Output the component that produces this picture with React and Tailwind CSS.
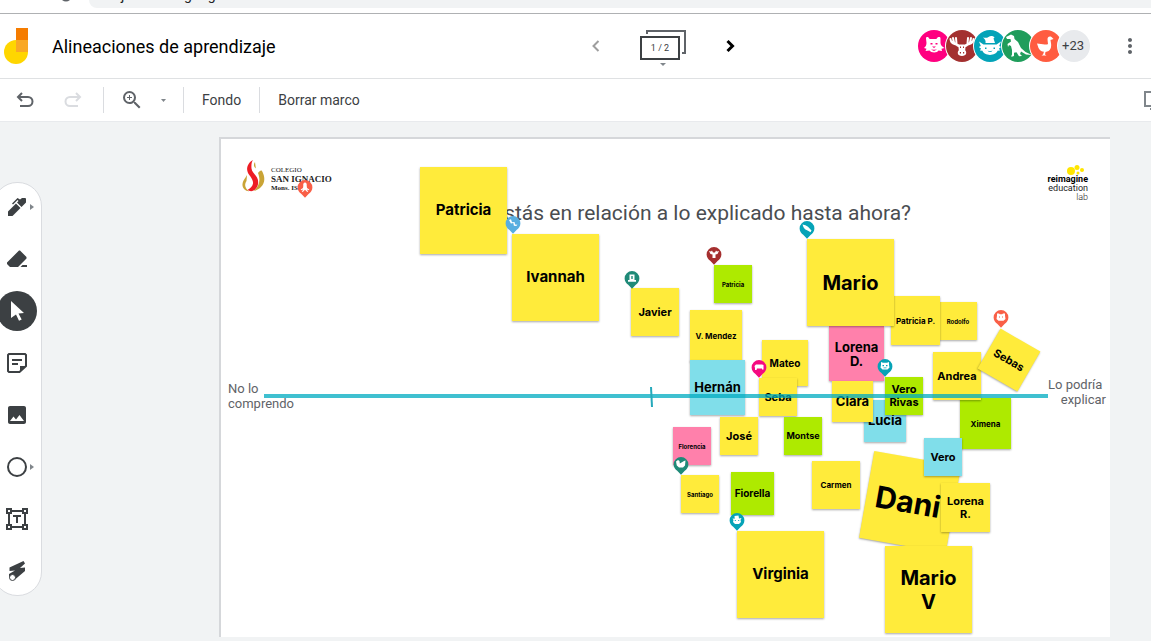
import React, { useState } from "react";
import { MdMoreVert, MdZoomIn, MdImage } from "react-icons/md";

const YELLOW = "bg-[#ffeb3b]";
const GREEN = "bg-[#aeea00]";
const CYAN = "bg-[#80deea]";
const PINK = "bg-[#ff80ab]";

// Later notes lie on top of earlier ones
const notes = [
  { text: "Patricia", color: YELLOW, place: "left-[199px] top-[28px] size-[87px]", font: "text-[15px]" },
  { text: "Ivannah", color: YELLOW, place: "left-[291px] top-[95px] size-[87px]", font: "text-[15px]" },
  { text: "Javier", color: YELLOW, place: "left-[410px] top-[149px] size-[48px]", font: "text-[11px]" },
  { text: "Patricia", color: GREEN, place: "left-[493px] top-[126px] size-[38px]", font: "text-[6px]" },
  { text: "V. Mendez", color: YELLOW, place: "left-[469px] top-[171px] size-[52px]", font: "text-[8px]" },
  { text: "Hernán", color: CYAN, place: "left-[469px] top-[221px] size-[55px]", font: "text-[13px]" },
  { text: "Mateo", color: YELLOW, place: "left-[541px] top-[201px] size-[46px]", font: "text-[10px]" },
  { text: "Seba", color: YELLOW, place: "left-[538px] top-[239px] size-[38px]", font: "text-[11px]" },
  { text: "José", color: YELLOW, place: "left-[499px] top-[278px] size-[38px]", font: "text-[11px]" },
  { text: "Montse", color: GREEN, place: "left-[563px] top-[278px] size-[38px]", font: "text-[9px]" },
  { text: "Florencia", color: PINK, place: "left-[452px] top-[288px] size-[38px]", font: "text-[6px]" },
  { text: "Santiago", color: YELLOW, place: "left-[460px] top-[336px] size-[38px]", font: "text-[6px]" },
  { text: "Fiorella", color: GREEN, place: "left-[510px] top-[333px] size-[43px]", font: "text-[10px]" },
  { text: "Carmen", color: YELLOW, place: "left-[591px] top-[322px] size-[48px]", font: "text-[8px]" },
  { text: "Virginia", color: YELLOW, place: "left-[516px] top-[392px] size-[87px]", font: "text-[15px]" },
  { text: "Lorena D.", color: PINK, place: "left-[608px] top-[187px] size-[55px]", font: "text-[13px] leading-[14px]" },
  { text: "Rodolfo", color: YELLOW, place: "left-[718px] top-[163px] size-[38px]", font: "text-[6px]" },
  { text: "Patricia P.", color: YELLOW, place: "left-[670px] top-[157px] size-[49px]", font: "text-[8px]" },
  { text: "Mario", color: YELLOW, place: "left-[586px] top-[100px] size-[87px]", font: "text-[20px]" },
  { text: "Lucía", color: CYAN, place: "left-[643px] top-[261px] size-[42px]", font: "text-[13px]" },
  { text: "Clara", color: YELLOW, place: "left-[611px] top-[242px] size-[41px]", font: "text-[13px]" },
  { text: "Vero Rivas", color: GREEN, place: "left-[664px] top-[238px] size-[38px]", font: "text-[11px] leading-[13px]" },
  { text: "Ximena", color: GREEN, place: "left-[739px] top-[259px] size-[51px]", font: "text-[8px]" },
  { text: "Andrea", color: YELLOW, place: "left-[712px] top-[213px] size-[48px]", font: "text-[11px]" },
  { text: "Sebas", color: YELLOW, place: "left-[765px] top-[198px] size-[46px] rotate-30", font: "text-[11px]" },
  { text: "Dani", color: YELLOW, place: "left-[645px] top-[319px] size-[88px] rotate-10", font: "text-[30px] pr-1" },
  { text: "Vero", color: CYAN, place: "left-[703px] top-[299px] size-[38px]", font: "text-[11px]" },
  { text: "Lorena R.", color: YELLOW, place: "left-[720px] top-[344px] size-[49px]", font: "text-[11px] leading-[13px]" },
  { text: "Mario V", color: YELLOW, place: "left-[664px] top-[407px] size-[87px]", font: "text-[20px] leading-[24px] px-3" },
];

const glyphs = {
  octopus: "M8 2.500c1.400 0 2 1.500 1.700 3.200L10 8l2.300 1.500-.5.800-2.100-.8 1.500 2-1 .5L8 9.700l-2.200 2.300-1-.5 1.500-2-2.100.8-.5-.8L6 8l.3-2.300C6 4 6.600 2.500 8 2.500z",
  snake: "M4 4l2-.8 1 3 2.500-.3.6 2.600 2.400.2-1.300 1.400-2.300-.4-.6-2.600-2.400.4z",
  hat: "M5.500 3.500h5v5.500h1.500v1.800H4V9h1.500zM7.300 5v3h1.400V5z",
  moose: "M3 4l2 .5L6 3.500l1 2h2l1-2 1 1L13 4l-1.500 3-2 .5L9.500 11h-3L6.500 7.500l-2-.5z",
  fish: "M3.500 3.500l3 .8 2.500 1.500 3.500 3.700-1 1.800-2-1.300-3.500-1.800-1.500-2z",
  hippo: "M3.500 6L5 4.500h6L12.500 5v4.500H11V8.500H6L5.500 10H4V8z",
  bear: "M4 3.500h2l.8.800h2.400l.8-.8h2v2l.5 3.500-2 1.800h-5l-2-1.800.5-3.500zM6 6.500v1h1v-1zM9 6.500v1h1v-1z",
  bird: "M3 4.500L5 3l1.500 1 .3 2.500L11 4l1.500-.5L12 8.500l-2 2H6L3.800 8.500z",
  axolotl: "M5.500 3l4-.5.500 3 2.500-.5-1 2 .5 2-2 2H6L4 9l.5-2-1-1.500 2.200.2zM5.800 7v1h1V7zM9.200 7v1h1V7z",
  otter: "M4 3l2 .8h4L12 3v3l.5 2.500-2 2h-5l-2-2L4 6zM5.500 6v1.200h1.500V6zM9 6v1.200h1.500V6zM6.500 8.500v.8h3v-.8z",
};

const pins = [
  { glyph: "octopus", place: "left-[76px] top-[41px]", color: "fill-[#f95f47]" },
  { glyph: "snake", place: "left-[284px] top-[77px]", color: "fill-[#58aee0]" },
  { glyph: "hat", place: "left-[403px] top-[132px]", color: "fill-[#1f8a78]" },
  { glyph: "moose", place: "left-[485px] top-[108px]", color: "fill-[#a52f2f]" },
  { glyph: "fish", place: "left-[578px] top-[82px]", color: "fill-[#06a3b7]" },
  { glyph: "hippo", place: "left-[530px] top-[221px]", color: "fill-[#f50a80]" },
  { glyph: "otter", place: "left-[656px] top-[220px]", color: "fill-[#06a3b7]" },
  { glyph: "bear", place: "left-[772px] top-[171px]", color: "fill-[#f95f47]" },
  { glyph: "bird", place: "left-[452px] top-[318px]", color: "fill-[#1f8a78]" },
  { glyph: "axolotl", place: "left-[508px] top-[374px]", color: "fill-[#06a3b7]" },
];

const Pin = ({ glyph, place, color }) => (
  <svg viewBox="0 0 16 18" className={`absolute h-[18px] w-4 ${place}`} aria-hidden="true">
    <path className={color} d="M8 0a7.400 7.400 0 0 1 7.400 7.400c0 3.200-1.900 4.800-3.600 6.300L8 17.700l-3.800-4C2.500 12.200.6 10.600.6 7.400A7.400 7.400 0 0 1 8 0z" />
    <path fill="#fff" fillRule="evenodd" d={glyphs[glyph]} />
  </svg>
);

const Note = ({ text, color, place, font }) => (
  <div
    className={`absolute flex items-center justify-center text-center font-bold text-black shadow-[0_1px_2px_rgba(0,0,0,0.35)] font-['Inter',sans-serif] ${color} ${place} ${font}`}
  >
    {text}
  </div>
);

const avatars = [
  {
    name: "Lobo",
    bg: "bg-[#ff0080]",
    art: (
      <path
        fillRule="evenodd"
        d="M8 8.500C8 6.500 10.500 6.500 11.500 9h7c1-2.500 4-2.500 4-.5L22.500 13c0 2 2 4 4 5l-3 .8.500 2.200-3.500-.5C19.500 23 13 23 11.500 20.500L7.500 21l1-2.200L6 18c1.500-1 2.500-3 2.500-5zM12.500 13v1.500h2V13zM17.500 13v1.500h2V13zM14 16.500l2 1.500 2-1.500zM13 19.500l3 1.500 3-1.500-3 .3z"
      />
    ),
  },
  {
    name: "Alce",
    bg: "bg-[#a3302f]",
    art: (
      <>
        <path
          fill="none"
          stroke="#fff"
          strokeWidth="2"
          strokeLinecap="round"
          strokeLinejoin="round"
          d="M4.500 9c0 4 3 5 7.500 6M7 8l1 4.500M10 8l.5 5.500M27.500 9c0 4-3 5-7.500 6M25 8l-1 4.500M22 8l-.5 5.500M5 11l7 4M27 11l-7 4"
        />
        <path
          fillRule="evenodd"
          d="M9.500 15.500l4-1h5l4 1-3 1.800-.3 3c1.800 2 1.500 5.700-3.200 5.700s-5-3.700-3.200-5.700l-.3-3zM14 16.500V18h1v-1.500zM17 16.500V18h1v-1.500zM13.800 22v1.500h1.200V22zM17 22v1.500h1.200V22z"
        />
      </>
    ),
  },
  {
    name: "Ajolote",
    bg: "bg-[#03a3b8]",
    art: (
      <>
        <path d="M9 7.500c2 .5 4 .5 5.500-.5 2-1.500 5-1 6 .5l-1 1 1.500 4.500H11.500c.5-2-.5-4-2.500-5.500z" />
        <path
          fillRule="evenodd"
          d="M5 11.500l4.500 3h13l4.500-3-1.800 4.500 2 1-2.200 1.500 1 2-2.500.3c-1.500 5.500-13.500 5.500-15 0L6 20.500l1-2L4.800 17l2-1zM11 17.500V19h1.500v-1.500zM19.500 17.500V19H21v-1.500zM13.500 20.500c1.500 2 3.500 2 5 0-1.500 1-3.500 1-5 0z"
        />
      </>
    ),
  },
  {
    name: "Dinosaurio",
    bg: "bg-[#1f9d5b]",
    art: <path d="M4 7l5-2.500 3 1.500.5 3 3.500 3 3 6 4.500 4L30 25l-6-.5-5-3-1 2.500 2 2-3 .3-2.500-4-2.500.5v3l-1 .7h-2l1-2V20l-1-4-2-1-1 2-.5-3L9 11.500 8.500 9H5z" />,
  },
  {
    name: "Ganso",
    bg: "bg-[#ff5c40]",
    art: <path d="M23.500 9l-2-2c-2.500-1.300-4.500.5-3.900 3.500l.4 3.500c-1 .8-3 .5-5 .3L7 13.500 8.500 18c1.500 3 3.500 3.500 5.500 3.800l-1 2.700-1.500 1h5l-1.500-1 .5-2.600c5-.4 6.500-4.400 5.300-9.900L20.500 10z" />,
  },
];

const stroke = { fill: "none", stroke: "currentColor", strokeWidth: 2 };

const Icon = ({ children, className = "size-6" }) => (
  <svg viewBox="0 0 24 24" fill="currentColor" className={`shrink-0 ${className}`} aria-hidden="true">
    {children}
  </svg>
);

const tools = [
  {
    name: "Bolígrafo",
    more: true,
    icon: <path d="M3 21v-4.500l8-8L15.500 13l-8 8zM12 7.500l1.500-1.500L12.500 5 8 9.500 7 8.500l5.500-5.500 2.500 1.500L17 3h3.500L21 4v3.500L16.500 12z" />,
  },
  {
    name: "Borrador",
    icon: <path d="M15 3.500L21.500 10v1.500L13 20H5l-3-3v-1.500l12-12zM15.500 20l2-2H22v2z" />,
  },
  {
    name: "Seleccionar",
    icon: <path d="M6 2l13 12-5.500.5 3.200 6-2.700 1.300-3-6.200L6 19z" />,
  },
  {
    name: "Nota adhesiva",
    icon: (
      <>
        <path d="M3 4v16l1 1h10.500L21 15V4l-1-1H4z" {...stroke} />
        <path d="M15 21v-6h6zM7 8h10v2H7zM7 12h6v2H7z" />
      </>
    ),
  },
  { name: "Imagen", icon: <MdImage className="size-6" /> },
  { name: "Formas", more: true, icon: <circle cx="12" cy="12" r="9" {...stroke} /> },
  {
    name: "Cuadro de texto",
    icon: (
      <>
        <path d="M4 4h16v16H4z" {...stroke} />
        <path d="M1 1h6v6H1zM17 1h6v6h-6zM1 17h6v6H1zM17 17h6v6h-6zM8 8h8v2h-3v6h-2v-6H8z" />
        <path fill="#fff" d="M3 3h2v2H3zM19 3h2v2h-2zM3 19h2v2H3zM19 19h2v2h-2z" />
      </>
    ),
  },
  {
    name: "Láser",
    icon: (
      <>
        <path d="M4.500 8.500L18.500 2l1.500 2.500-5 4.500 5-.5V12L10 20.500l-6-2L4 15l6-3.500-5.500.5z" />
        <circle cx="7.500" cy="18.500" r="3" fill="#fff" stroke="currentColor" />
      </>
    ),
  },
];

const BrowserBar = () => (
  <div className="flex h-[14px] overflow-hidden border-b border-[#afb1b3] bg-white">
    <div className="flex w-[89px] shrink-0 justify-end pr-[19px]">
      <svg viewBox="0 0 8 2" className="h-0.5 w-2" aria-hidden="true">
        <path d="M0 0q4 3 8 0z" fill="#5f6368" />
      </svg>
    </div>
    <div className="flex h-2 flex-1 overflow-hidden rounded-bl-xl bg-[#f1f3f4] pl-8 text-[14px] leading-4">
      <span className="-mt-[13px] text-[#202124]">jamboard.google.com</span>
    </div>
  </div>
);

const Header = () => (
  <header className="flex h-[65px] items-center border-b border-[#dfe1e3] bg-white pb-px">
    <div className="flex flex-1 items-center">
      <svg viewBox="0 0 24 36" className="ml-1 h-9 w-6 shrink-0" role="img" aria-label="Jamboard">
        <circle cx="12" cy="24" r="12" fill="#ffd600" />
        <path fill="#f57c00" d="M12 0h12v12H12z" />
        <path fill="#f9a825" d="M12 12h12v12H12z" />
      </svg>
      <h1 className="ml-6 pt-0.5 text-[18px] leading-6 whitespace-nowrap text-black">Alineaciones de aprendizaje</h1>
    </div>

    <div className="mr-[176px] flex items-center gap-8">
      <button aria-label="Marco anterior" className="text-[#9e9e9e]">
        <Icon><path d="M14.500 7L9.500 12l5 5" {...stroke} /></Icon>
      </button>
      <button aria-label="Mostrar barra de marcos" className="grid h-10 w-[46px] text-[#3c4043]">
        <svg viewBox="0 0 46 40" className="col-start-1 row-start-1 h-10 w-[46px]" aria-hidden="true">
          <path d="M7 8V5h38v22h-3" fill="none" stroke="#5f6368" strokeWidth="2" />
          <path d="M1 11h38v22H1z" {...stroke} />
          <path d="M20 37h6l-3 3z" fill="#80868b" />
        </svg>
        <span className="col-start-1 row-start-1 w-10 self-center pt-1 text-center text-[9px] leading-4">1 / 2</span>
      </button>
      <button aria-label="Marco siguiente" className="text-black">
        <Icon><path d="M9.500 7l5 5-5 5" {...stroke} strokeWidth="3" /></Icon>
      </button>
    </div>

    <div className="flex items-center pr-[9px]">
      {avatars.map(({ name, bg, art }) => (
        <div key={name} className={`-mr-1 size-8 rounded-full ring-1 ring-white ${bg}`}>
          <svg viewBox="0 0 32 32" className="size-8" fill="#fff" role="img" aria-label={name}>{art}</svg>
        </div>
      ))}
      <div className="flex size-8 items-center justify-center rounded-full bg-[#e8eaed] pr-0.5 text-[13px] text-[#3c4043] ring-1 ring-white">
        +23
      </div>
      <button aria-label="Más acciones" className="ml-7 text-[#5f6368]">
        <MdMoreVert className="size-6" />
      </button>
    </div>
  </header>
);

const Separator = () => <div className="h-[26px] w-px shrink-0 bg-[#dadce0]" />;

const Toolbar = () => (
  <div className="flex h-[43px] items-center overflow-hidden border-b border-[#e8eaed] bg-white text-[14px] text-[#3c4043]">
    <button aria-label="Deshacer" className="ml-[13px] text-[#5f6368]">
      <Icon><path d="M9 5L5 9l4 4M5.500 9H15a4.500 4.500 0 0 1 0 9H7" {...stroke} /></Icon>
    </button>
    <button aria-label="Rehacer" className="ml-6 text-[#dadce0]" disabled>
      <Icon><path d="M15 5l4 4-4 4M18.500 9H9a4.500 4.500 0 0 0 0 9h8" {...stroke} /></Icon>
    </button>
    <div className="w-[18px] shrink-0" />
    <Separator />
    <button aria-label="Zoom" className="ml-4 text-[#5f6368]">
      <MdZoomIn className="size-6" />
    </button>
    <button aria-label="Opciones de zoom" className="mr-[17px] ml-[17px] text-[#80868b]">
      <svg viewBox="0 0 5 3" className="h-[3px] w-[5px]" fill="currentColor" aria-hidden="true"><path d="M0 0h5L2.500 3z" /></svg>
    </button>
    <Separator />
    <button className="px-[18px]">Fondo</button>
    <Separator />
    <button className="px-[18px] whitespace-nowrap">Borrar marco</button>
    <div className="flex-1" />
    <button aria-label="Presentar" className="-mr-4 text-[#80868b]">
      <Icon><path d="M2 4h20v14H2zM7 21h10" {...stroke} /></Icon>
    </button>
  </div>
);

const ToolPanel = () => {
  const [active, setActive] = useState("Seleccionar");

  return (
    <nav className="mt-[60px] -ml-[7px] flex w-[49px] shrink-0 flex-col gap-3 self-start rounded-[24px] border border-[#dadce0] bg-white py-1">
      {tools.map(({ name, icon, more }) => (
        <button
          key={name}
          aria-label={name}
          onClick={() => setActive(name)}
          className="flex h-10 items-center pl-[3px] text-[#3c4043]"
        >
          <span
            className={`flex size-10 shrink-0 items-center justify-center rounded-full ${
              active === name ? "bg-[#3c4043] text-white" : ""
            }`}
          >
            <Icon>{icon}</Icon>
          </span>
          {more && (
            <svg viewBox="0 0 4 6" className="-ml-[7px] h-[6px] w-1 shrink-0" fill="#80868b" aria-hidden="true">
              <path d="M0 0l4 3-4 3z" />
            </svg>
          )}
        </button>
      ))}
    </nav>
  );
};

const Board = () => (
  <main className="relative mt-[15px] mr-[41px] mb-1 ml-[177px] min-h-[500px] min-w-[891px] flex-1 border-t-2 border-l-2 border-[#d5d7da] bg-white">
    {/* School logo */}
    <div className="absolute top-[20px] left-[20px] flex items-start text-[#222]">
      <svg viewBox="0 0 24 34" className="h-[34px] w-6 shrink-0" role="img" aria-label="Colegio San Ignacio">
        <path fill="#c9a436" d="M6 16c-2 4-4 5-4.500 9S4 32 8 32.500C4 29 3 26 5.500 22zM14 3c-2 3-1 5 1 6.500L14.500 7zM17 14c1.500-2 3-3 4-2 3 5 3.500 12-1 16-2 2-5 3.500-7 4 5-5 7-10 4-18z" />
        <path fill="#ed1c24" d="M12 1C8 3 5 8 6.500 12.500c1 4 6 7 5.500 12-.3 3-3 5-5.500 6.500 2.500 1.800 6 1.500 8-1 3-3 3.500-8 1.500-11.500-1.500-3-5-5-5.500-9C10.200 6 10.500 3 12 1z" />
      </svg>
      <div className="ml-[6px] pt-[7px] font-['Liberation_Serif',serif] text-[7px] leading-[9px] whitespace-nowrap">
        <div>COLEGIO</div>
        <div className="text-[9px] font-bold">SAN IGNACIO</div>
        <div className="font-bold">Mons. IS</div>
      </div>
    </div>

    {/* Reimagine logo */}
    <div className="absolute top-[25px] left-[817px] flex w-[50px] flex-col items-end text-[9px] leading-[9px] text-[#222] font-['Roboto',sans-serif]">
      <svg viewBox="0 0 20 11" className="mr-[2px] h-[11px] w-5" fill="#ffe600" aria-hidden="true">
        <circle cx="5" cy="7" r="4" />
        <circle cx="11" cy="3.500" r="2.500" />
        <circle cx="12" cy="9" r="1.500" />
        <circle cx="16" cy="6" r="2" />
      </svg>
      <span className="font-bold text-black">reimagine</span>
      <span>education</span>
      <span className="font-light">lab</span>
    </div>

    <h2 className="absolute top-[62px] left-[272px] text-[21px] leading-6 whitespace-nowrap text-[#4a4d51]">
      estás en relación a lo explicado hasta ahora?
    </h2>

    <p className="absolute top-[242px] left-[7px] text-[13px] leading-[15px] text-[#5f6368]">
      No lo
      <br />
      comprendo
    </p>
    <p className="absolute top-[238px] left-[827px] w-[58px] text-[13px] leading-[15px] text-[#5f6368]">
      <span className="block whitespace-nowrap">Lo podría</span>
      <span className="block text-right">explicar</span>
    </p>

    {notes.map((note) => (
      <Note key={note.text + note.place} {...note} />
    ))}

    {/* Scale line */}
    <svg viewBox="0 0 784 22" className="absolute top-[247px] left-[43px] h-[22px] w-[784px]" aria-hidden="true">
      <path d="M0 10h784" stroke="#00acc1" strokeWidth="4" opacity="0.75" />
      <path d="M387 1l1 20" stroke="#26a9bb" strokeWidth="2" />
    </svg>

    {pins.map((pin) => (
      <Pin key={pin.place} {...pin} />
    ))}
  </main>
);

const App = () => (
  <div className="flex min-h-screen flex-col overflow-hidden bg-[#f1f3f4] font-['Roboto',sans-serif]">
    <BrowserBar />
    <Header />
    <Toolbar />
    <div className="flex flex-1">
      <ToolPanel />
      <Board />
    </div>
  </div>
);

export default App;
